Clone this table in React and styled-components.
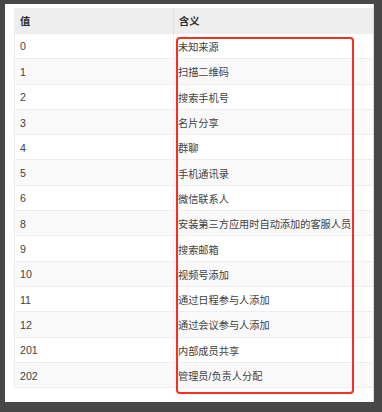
import React from "react";
import styled, { createGlobalStyle } from "styled-components";

const GlobalStyle = createGlobalStyle`
  html, body {
    margin: 0;
    padding: 0;
    background: #474747;
  }
  body {
    width: 382px;
    height: 412px;
    overflow: hidden;
    font-family: "Liberation Sans", "Noto Sans CJK SC", sans-serif;
  }
`;

const Frame = styled.div`
  width: 382px;
  height: 412px;
  padding: 4px 8px 10px 5px;
  box-sizing: border-box;
`;

const Card = styled.div`
  background: #ffffff;
  height: 398px;
  padding: 4px 0 0 9px;
  box-sizing: border-box;
  overflow: hidden;
  border-right: 1px solid #dcdcdc;
`;

const TableWrap = styled.div`
  position: relative;
  width: 360px;
`;

const Table = styled.table`
  width: 100%;
  border-collapse: collapse;
  table-layout: fixed;
  font-size: 10.3px;
  color: #424242;
  border-left: 1px solid #eceef2;
`;

const HeadCell = styled.th`
  height: 25.5px;
  padding: 0 0 0 5px;
  text-align: left;
  font-weight: 700;
  color: #2e2e2e;
  background: #eeeeee;
  border-right: 1px solid #e4e4e4;
  box-sizing: border-box;
  width: ${(p) => p.$w || "auto"};
`;

const Row = styled.tr`
  background: ${(p) => (p.$odd ? "#f9f9fa" : "#ffffff")};
  border-bottom: 1px solid #eceef2;
`;

const Cell = styled.td`
  height: 25.3px;
  padding: 1px 0 0 ${(p) => (p.$second ? "4px" : "5px")};
  box-sizing: border-box;
  white-space: nowrap;
  font-size: ${(p) => (p.$second ? "10.2px" : "10.6px")};
  border-right: 1px solid #eceef2;
`;

const Highlight = styled.div`
  position: absolute;
  left: 162px;
  top: 29px;
  width: 178px;
  height: 357px;
  border: 2px solid #f5301c;
  border-radius: 4px;
  box-sizing: border-box;
  pointer-events: none;
`;

const rows = [
  ["0", "未知来源"],
  ["1", "扫描二维码"],
  ["2", "搜索手机号"],
  ["3", "名片分享"],
  ["4", "群聊"],
  ["5", "手机通讯录"],
  ["6", "微信联系人"],
  ["8", "安装第三方应用时自动添加的客服人员"],
  ["9", "搜索邮箱"],
  ["10", "视频号添加"],
  ["11", "通过日程参与人添加"],
  ["12", "通过会议参与人添加"],
  ["201", "内部成员共享"],
  ["202", "管理员/负责人分配"],
];

export default function App() {
  return (
    <>
      <GlobalStyle />
      <Frame>
        <Card>
          <TableWrap>
            <Table>
              <thead>
                <tr>
                  <HeadCell $w="159px">值</HeadCell>
                  <HeadCell>含义</HeadCell>
                </tr>
              </thead>
              <tbody>
                {rows.map(([value, meaning], i) => (
                  <Row key={value} $odd={i % 2 === 1}>
                    <Cell>{value}</Cell>
                    <Cell $second>{meaning}</Cell>
                  </Row>
                ))}
              </tbody>
            </Table>
            <Highlight />
          </TableWrap>
        </Card>
      </Frame>
    </>
  );
}
